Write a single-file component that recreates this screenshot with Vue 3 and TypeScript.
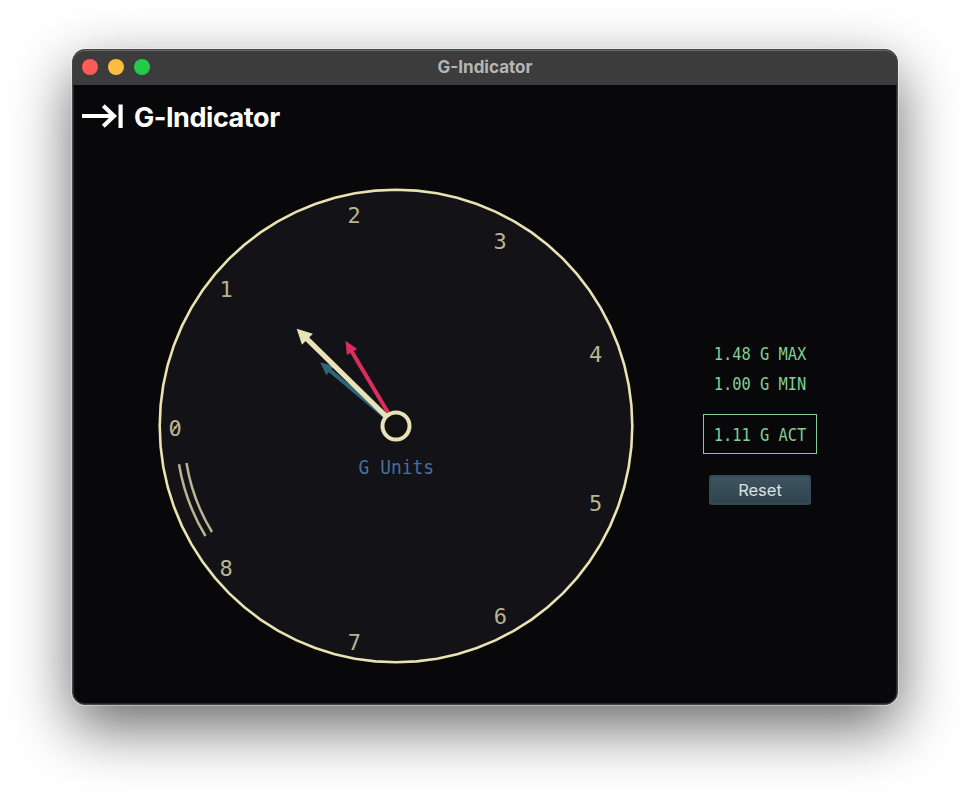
<script setup lang="ts">
interface Mark { label: string; x: number; y: number }
interface Needle { name: string; angle: number; length: number; head: number; half: number; width: number }

const cx = 396
const cy = 426
const radius = 236.3
const rimSegments = 72

const marks: Mark[] = [
  { label: '0', x: 175, y: 428.3 },
  { label: '1', x: 226, y: 289.3 },
  { label: '2', x: 354, y: 215 },
  { label: '3', x: 500, y: 241 },
  { label: '4', x: 595.5, y: 354.3 },
  { label: '5', x: 595.5, y: 502.8 },
  { label: '6', x: 500.3, y: 616.3 },
  { label: '7', x: 354.3, y: 642 },
  { label: '8', x: 226, y: 568 },
]

const rim = Array.from({ length: rimSegments }, (_, i) => {
  const a = (i * 2 * Math.PI) / rimSegments
  return `${(cx + radius * Math.cos(a)).toFixed(2)},${(cy + radius * Math.sin(a)).toFixed(2)}`
}).join(' ')

const needles: Needle[] = [
  { name: 'min', angle: 220, length: 99, head: 13, half: 6, width: 4 },
  { name: 'max', angle: 239.3, length: 99, head: 13, half: 6, width: 4 },
  { name: 'act', angle: 224.4, length: 139, head: 15, half: 7.8, width: 5.2 },
]
const readings = ['1.48 G MAX', '1.00 G MIN']
</script>

<template>
  <div class="desktop">
    <div class="window">
      <div class="titlebar">
        <div class="lights">
          <span class="light close"></span>
          <span class="light minimize"></span>
          <span class="light zoom"></span>
        </div>
        <span class="caption">G-Indicator</span>
      </div>
      <header class="heading">
        <svg class="arrow" width="42" height="25" viewBox="0 0 42 25">
          <path d="M0 12H33M21.3 1.7L32 12L21.3 22.3" />
          <path d="M38.6 .4V24" />
        </svg>
        <h1>G-Indicator</h1>
      </header>
      <main class="content">
        <svg class="gauge" width="480" height="480" viewBox="156 186 480 480">
          <polygon class="rim" :points="rim" />
          <path class="arc" d="M179 464.3Q185.5 503 205.5 536M186.5 463Q192.5 500 212 532" />
          <g v-for="m in marks" :key="m.label" :transform="`translate(${m.x} ${m.y + 8})`">
            <text class="mark">{{ m.label }}</text>
            <path v-if="m.label === '0'" class="slash" d="M-3.6 -3.2L3.6 -13" />
          </g>
          <g v-for="n in needles" :key="n.name" :class="n.name" :transform="`translate(${cx} ${cy}) rotate(${n.angle})`">
            <path class="shaft" :d="`M0 0H${n.length - n.head + 1}`" :stroke-width="n.width" />
            <path class="head" :d="`M${n.length} 0L${n.length - n.head} ${-n.half}V${n.half}Z`" />
          </g>
          <circle class="hub" :cx="cx" :cy="cy" r="13.5" />
          <text class="unit" x="358.6" y="473.7" textLength="75.4" lengthAdjust="spacingAndGlyphs">G Units</text>
        </svg>
        <aside class="readout">
          <div v-for="r in readings" :key="r" class="value"><span class="digits">{{ r }}</span></div>
          <div class="value actual"><span class="digits">1.11 G ACT</span></div>
          <button class="reset" type="button">Reset</button>
        </aside>
      </main>
    </div>
  </div>
</template>

<style>
body { margin: 0; background: #fff; }
</style>

<style scoped>
.desktop {
  box-sizing: border-box;
  width: 970px;
  height: 800px;
  padding: 49px 72px 0;
  overflow: hidden;
  background: #fff;
}
.window {
  box-sizing: border-box;
  width: 826px;
  height: 656px;
  border: 1px solid #444648;
  border-radius: 13px;
  background: #08080a;
  box-shadow: inset 0 0 0 1px #26272a, 0 0 0 1px rgba(255, 255, 255, .35), 0 22px 60px rgba(0, 0, 0, .6);
  overflow: hidden;
}
.titlebar {
  display: grid;
  grid-template-columns: 1fr auto 1fr;
  align-items: center;
  height: 35px;
  background: #3c3c3c;
  border-radius: 12px 12px 0 0;
  box-shadow: inset 0 1px 0 #6a6a6a;
}
.lights { display: flex; gap: 10px; padding: 0 0 2px 9px; }
.light { width: 16px; height: 16px; border-radius: 50%; }
.close { background: #ff5b59; }
.minimize { background: #ffbc40; }
.zoom { background: #24ca49; }
.caption {
  padding-bottom: 2px;
  font: 700 17px Inter, sans-serif;
  color: #b6b6b6;
}
.heading { display: flex; align-items: center; gap: 11px; height: 64px; padding-left: 9px; }
.arrow { fill: none; stroke: #fff; stroke-width: 4.2; margin-top: -1px; }
h1 { margin: 0 0 0 -1px; font: 650 27px Inter, sans-serif; letter-spacing: -.45px; color: #fff; }
.content { display: flex; padding: 37px 0 0 83px; }
.gauge { display: block; flex: none; }
.rim { fill: #131217; stroke: #e9e2b1; stroke-width: 2.6; }
.arc { fill: none; stroke: #b9b491; stroke-width: 2.5; }
.mark { font: 22px "DejaVu Sans Mono", monospace; fill: #b9b491; text-anchor: middle; }
.slash { fill: none; stroke: #b9b491; stroke-width: 1.5; }
.unit { font: 19px "DejaVu Sans Mono", monospace; fill: #486e9d; }
.min { stroke: #30647a; fill: #30647a; }
.max { stroke: #dc2d5f; fill: #dc2d5f; }
.act { stroke: #e9e2b8; fill: #e9e2b8; }
.head { stroke: none; }
.hub { fill: #111; stroke: #e9e2b8; stroke-width: 4; }
.readout {
  display: flex;
  flex-direction: column;
  align-items: center;
  padding: 153px 0 0 67px;
}
.value {
  font: 15.4px/30px "DejaVu Sans Mono", monospace;
  color: #83ce94;
  white-space: pre;
}
.digits { display: inline-block; transform: scaleY(1.1); }
.actual {
  box-sizing: border-box;
  width: 114px;
  height: 40px;
  margin-top: 15px;
  border: 1px solid #83ce94;
  line-height: 40px;
  text-align: center;
}
.reset {
  width: 102px;
  height: 30px;
  margin-top: 21px;
  padding: 0;
  border: 2px solid #304c56;
  border-radius: 3px;
  background: linear-gradient(#3d535d, #2f444e);
  color: #dce0e1;
  font: 16.5px Inter, sans-serif;
}
</style>
